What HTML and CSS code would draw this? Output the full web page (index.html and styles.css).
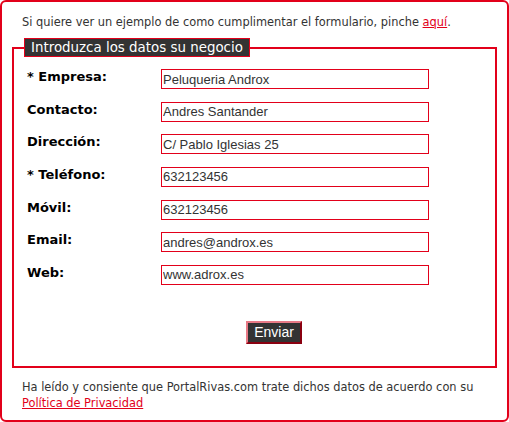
FILE: index.html
```html
<!DOCTYPE html>
<html>
<head>
  <title>Datos del negocio</title>
  <link rel="stylesheet" href="styles.css">
</head>
<body>
  <div class="box">
    <p class="intro">Si quiere ver un ejemplo de como cumplimentar el formulario, pinche <a href="#">aquí</a>.</p>

    <form>
      <fieldset>
        <legend>Introduzca los datos su negocio</legend>

        <div class="fields">
          <label for="empresa">* Empresa:</label>
          <input type="text" id="empresa" value="Peluqueria Androx">

          <label for="contacto">Contacto:</label>
          <input type="text" id="contacto" value="Andres Santander">

          <label for="direccion">Dirección:</label>
          <input type="text" id="direccion" value="C/ Pablo Iglesias 25">

          <label for="telefono">* Teléfono:</label>
          <input type="text" id="telefono" value="632123456">

          <label for="movil">Móvil:</label>
          <input type="text" id="movil" value="632123456">

          <label for="email">Email:</label>
          <input type="text" id="email" value="andres@androx.es">

          <label for="web">Web:</label>
          <input type="text" id="web" value="www.adrox.es">
        </div>

        <div class="actions">
          <button type="button" id="enviarBtn">Enviar</button>
        </div>
      </fieldset>
    </form>

    <p class="legal">Ha leído y consiente que PortalRivas.com trate dichos datos de acuerdo con su <a href="#">Política de Privacidad</a></p>
  </div>
</body>
</html>
```

FILE: styles.css
```css
body {
  margin: 0;
  background-color: #ffffff;
  font-family: "DejaVu Sans", Verdana, sans-serif;
  color: #333333;
}

a {
  color: #e2001a;
}

.box {
  width: 509px;
  height: 422px;
  box-sizing: border-box;
  border: 2px solid #e2001a;
  border-radius: 6px;
  padding: 0 10px;
}

.intro {
  margin: 13px 0 0 10px;
  font-size: 11.4px;
  line-height: 14px;
}

fieldset {
  margin: 9px 0 0 0;
  padding: 0 10px;
  border: 2px solid #e2001a;
  height: 330px;
  box-sizing: border-box;
}

legend {
  padding: 0 6px;
  background-color: #333333;
  border: 1px solid #e2001a;
  color: #ffffff;
  font-size: 13.4px;
  line-height: 17px;
}

.fields {
  display: grid;
  grid-template-columns: 134px 268px;
  grid-auto-rows: 20px;
  row-gap: 12.67px;
  margin: 12px 0 0 3px;
}

label {
  font-size: 13px;
  font-weight: bold;
  color: #000000;
  line-height: 16px;
}

input[type="text"] {
  width: 268px;
  height: 20px;
  box-sizing: border-box;
  border: 1px solid #e2001a;
  padding: 0 1px;
  font-family: "Liberation Sans", Arial, sans-serif;
  font-size: 13px;
  color: #333333;
  outline: none;
}

.actions {
  text-align: center;
  margin-top: 36px;
  padding-left: 39px;
}

#enviarBtn {
  height: 23px;
  padding: 0 6px;
  background-color: #333333;
  color: #ffffff;
  border: 2px solid #e2001a;
  border-top-color: #e87a86;
  border-left-color: #e87a86;
  border-right-color: #8a0010;
  border-bottom-color: #8a0010;
  font-family: "Liberation Sans", Arial, sans-serif;
  font-size: 14px;
  cursor: pointer;
}

.legal {
  margin: 11px 0 0 10px;
  font-size: 11.4px;
  line-height: 16px;
}
```
